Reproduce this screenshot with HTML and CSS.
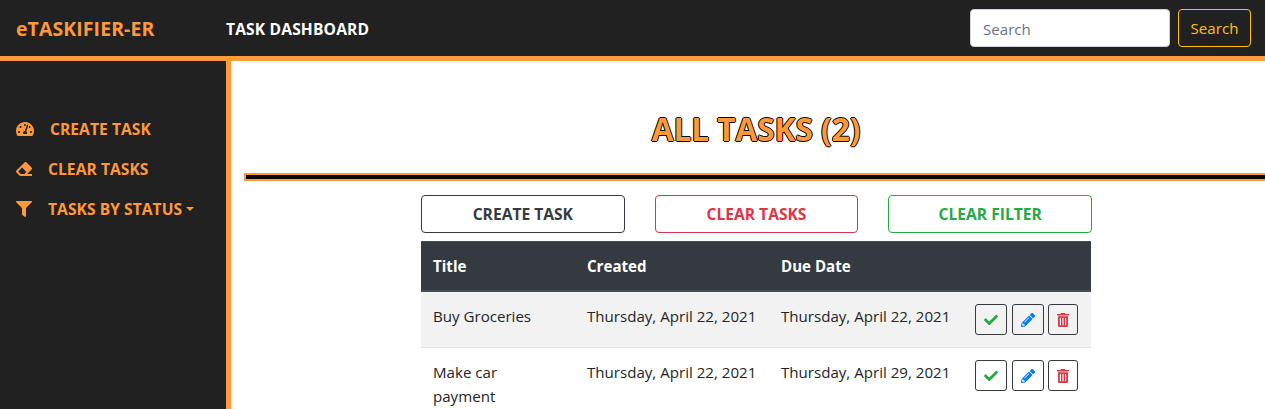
FILE: index.html
```html
<!DOCTYPE html>
<html lang="en">
<head>
<meta charset="utf-8">
<title>eTaskifier-er</title>
<link rel="stylesheet" href="styles.css">
</head>
<body>
<svg class="sprite" aria-hidden="true">
  <symbol id="gauge" viewBox="0 0 576 512"><path d="M288 32C128.940 32 0 160.940 0 320c0 52.800 14.250 102.260 39.060 144.800 5.610 9.620 16.300 15.200 27.440 15.200h443c11.140 0 21.830-5.580 27.440-15.200C561.750 422.260 576 372.800 576 320c0-159.060-128.940-288-288-288zm0 64c14.710 0 26.580 10.130 30.320 23.650-1.110 2.260-2.640 4.230-3.450 6.670l-9.220 27.670c-5.130 3.490-10.970 6.010-17.640 6.010-17.670 0-32-14.330-32-32S270.330 96 288 96zM96 384c-17.670 0-32-14.330-32-32s14.330-32 32-32 32 14.330 32 32-14.330 32-32 32zm48-160c-17.670 0-32-14.330-32-32s14.330-32 32-32 32 14.330 32 32-14.330 32-32 32zm246.770-72.410l-61.330 184C343.130 347.330 352 364.540 352 384c0 11.720-3.380 22.550-8.880 32H232.880c-5.500-9.450-8.880-20.280-8.880-32 0-33.940 26.500-61.430 59.900-63.590l61.340-184.010c4.170-12.560 17.730-19.450 30.360-15.170 12.570 4.190 19.350 17.790 15.170 30.360zm14.660 57.200l15.520-46.550c3.470-1.290 7.130-2.230 11.050-2.230 17.670 0 32 14.330 32 32s-14.330 32-32 32c-11.380-.010-20.890-6.280-26.570-15.220zM480 384c-17.670 0-32-14.330-32-32s14.330-32 32-32 32 14.330 32 32-14.330 32-32 32z"/></symbol>
  <symbol id="eraser" viewBox="0 0 512 512"><path d="M497.941 273.941c18.745-18.745 18.745-49.137 0-67.882l-160-160c-18.745-18.745-49.136-18.746-67.883 0l-256 256c-18.745 18.745-18.745 49.137 0 67.882l96 96A48.004 48.004 0 0 0 144 480h356c6.627 0 12-5.373 12-12v-40c0-6.627-5.373-12-12-12H355.883l142.058-142.059zm-302.627-62.627l137.373 137.373L265.373 416H150.628l-80-80 124.686-124.686z"/></symbol>
  <symbol id="filter" viewBox="0 0 512 512"><path d="M487.976 0H24.028C2.710 0-8.047 25.866 7.058 40.971L192 225.941V432c0 7.831 3.821 15.170 10.237 19.662l80 55.980C298.020 518.690 320 507.493 320 487.980V225.941l184.947-184.970C520.021 25.896 509.338 0 487.976 0z"/></symbol>
  <symbol id="check" viewBox="0 0 512 512"><path d="M173.898 439.404l-166.400-166.400c-9.997-9.997-9.997-26.206 0-36.204l36.203-36.204c9.997-9.998 26.207-9.998 36.204 0L192 312.690 432.095 72.596c9.997-9.997 26.207-9.997 36.204 0l36.203 36.204c9.997 9.997 9.997 26.206 0 36.204l-294.400 294.401c-9.998 9.997-26.207 9.997-36.204-.001z"/></symbol>
  <symbol id="pencil" viewBox="0 0 512 512"><path d="M497.900 142.100l-46.100 46.100c-4.700 4.700-12.300 4.700-17 0l-111-111c-4.700-4.700-4.700-12.300 0-17l46.100-46.100c18.700-18.700 49.100-18.700 67.900 0l60.100 60.100c18.800 18.700 18.800 49.100 0 67.900zM284.200 99.800L21.600 362.400.400 483.900c-2.900 16.400 11.400 30.600 27.800 27.800l121.500-21.300 262.600-262.600c4.700-4.700 4.700-12.300 0-17l-111-111c-4.800-4.700-12.400-4.700-17.100 0zM124.100 339.900c-5.500-5.500-5.500-14.300 0-19.800l154-154c5.500-5.500 14.300-5.500 19.800 0s5.500 14.300 0 19.800l-154 154c-5.500 5.500-14.300 5.500-19.800 0zM88 424h48v36.300l-64.500 11.300-31.100-31.100L51.700 376H88v48z"/></symbol>
  <symbol id="trash" viewBox="0 0 12 14"><path fill-rule="evenodd" d="M0 1h3.500l.6-1h3.800l.6 1H12v1.500H0zM1 3.200h10v9.500q0 1.300-1.300 1.300H2.300Q1 14 1 12.700zM2.800 5v7.200h1.200V5zM5.400 5v7.200h1.200V5zM8 5v7.200h1.200V5z"/></symbol>
</svg>
<header class="topbar">
  <a class="brand"><span>eTASKIFIER-ER</span></a>
  <span class="page-name">TASK DASHBOARD</span>
  <form class="search">
    <input class="search-input" type="text" placeholder="Search" aria-label="Search">
    <button class="search-button" type="button">Search</button>
  </form>
</header>
<div class="layout">
  <nav class="sidebar">
    <a class="nav-link nav-create"><svg class="icon-gauge"><use href="#gauge"/></svg><span>CREATE TASK</span></a>
    <a class="nav-link nav-clear"><svg class="icon-nav"><use href="#eraser"/></svg><span>CLEAR TASKS</span></a>
    <a class="nav-link nav-status"><svg class="icon-nav"><use href="#filter"/></svg><span>TASKS BY STATUS</span><i class="caret"></i></a>
  </nav>
  <main class="content">
    <h1 class="heading"><span>ALL TASKS (2)</span></h1>
    <div class="divider"></div>
    <div class="panel">
      <div class="actions">
        <button class="action dark">CREATE TASK</button>
        <button class="action danger">CLEAR TASKS</button>
        <button class="action success">CLEAR FILTER</button>
      </div>
      <table class="tasks">
        <colgroup><col class="col-title"><col class="col-date"><col class="col-date"><col class="col-tools"></colgroup>
        <thead><tr><th><span>Title</span></th><th><span>Created</span></th><th><span>Due Date</span></th><th></th></tr></thead>
        <tbody>
          <tr class="striped">
            <td>Buy Groceries</td><td><span class="date">Thursday, April 22, 2021</span></td><td><span class="date">Thursday, April 22, 2021</span></td>
            <td><div class="tools"><button class="tool green" aria-label="Complete"><svg><use href="#check"/></svg></button><button class="tool blue" aria-label="Edit"><svg><use href="#pencil"/></svg></button><button class="tool red" aria-label="Delete"><svg><use href="#trash"/></svg></button></div></td>
          </tr>
          <tr>
            <td>Make car<br>payment</td><td><span class="date">Thursday, April 22, 2021</span></td><td><span class="date">Thursday, April 29, 2021</span></td>
            <td><div class="tools"><button class="tool green" aria-label="Complete"><svg><use href="#check"/></svg></button><button class="tool blue" aria-label="Edit"><svg><use href="#pencil"/></svg></button><button class="tool red" aria-label="Delete"><svg><use href="#trash"/></svg></button></div></td>
          </tr>
        </tbody>
      </table>
    </div>
  </main>
</div>
</body>
</html>
```
FILE: styles.css
```css
* { box-sizing: border-box; }
html, body { height: 100%; }
body {
  margin: 0;
  display: flex;
  flex-direction: column;
  overflow: hidden;
  background: #fff;
  color: #212529;
  font: 15.1px/24px "Open Sans", "Noto Sans", sans-serif;
}
button, input { font: inherit; margin: 0; }
svg { display: block; fill: currentColor; flex: none; }
.sprite { display: none; }

.topbar {
  flex: none;
  display: flex;
  align-items: center;
  height: 61px;
  padding: 0 14px 0 16px;
  background: #212121;
  border-bottom: 5px solid #ff993c;
}
.brand { width: 210px; padding-top: 2px; color: #ff993c; font-size: 19.4px; font-weight: 700; letter-spacing: 0.13px; }
.page-name { padding-top: 1px; color: #fff; font-size: 15.6px; font-weight: 700; letter-spacing: 0.15px; white-space: nowrap; }
.search { display: flex; gap: 8px; margin-left: auto; }
.search-input {
  width: 200px;
  height: 38px;
  padding: 1px 12px 0;
  border: 1px solid #ced4da;
  border-radius: 4px;
  background: #fff;
}
.search-input::placeholder { color: #6c757d; opacity: 1; }
.search-button {
  width: 73px;
  height: 38px;
  padding: 0;
  color: #ffc107;
  background: transparent;
  border: 1px solid #ffc107;
  border-radius: 4px;
}

.layout { flex: 1; display: flex; min-height: 0; }
.sidebar {
  flex: none;
  width: 231px;
  padding: 48px 0 0 16px;
  background: #212121;
  border-right: 5px solid #ff993c;
}
.nav-link {
  display: flex;
  align-items: center;
  height: 40px;
  color: #ff993c;
  font-size: 15.6px;
  font-weight: 700;
  letter-spacing: 0.05px;
  white-space: nowrap;
}
.icon-gauge { width: 18px; height: 16px; margin-right: 16px; }
.icon-nav { width: 16px; height: 16px; margin-right: 16px; }
.caret {
  margin: -1px 0 0 4px;
  border-top: 4px solid;
  border-left: 4px solid transparent;
  border-right: 4px solid transparent;
}

.content { flex: 1; min-width: 0; padding: 48px 0 0 13px; }
.heading {
  margin: 0 0 25px;
  padding-left: 3px;
  color: #ff993c;
  font-size: 31.5px;
  line-height: 39px;
  font-weight: 700;
  text-align: center;
  text-shadow: -1px 0 #000, 0 1px #000, 1px 0 #000, 0 -1px #000;
}
.divider {
  height: 8px;
  background: #000;
  border: solid #ff993c;
  border-width: 2px 0 2px 2px;
}
.panel { width: 671px; margin: 14px 0 0 177px; }
.actions { display: grid; grid-template-columns: repeat(3, 1fr); gap: 30px; margin-bottom: 8px; }
.action {
  height: 38px;
  padding: 0;
  font-size: 15.6px;
  font-weight: 700;
  background: #fff;
  border: 1px solid;
  border-radius: 4px;
}
.dark { color: #343a40; }
.danger { color: #dc3545; }
.success { color: #28a745; }

.tasks { width: 670px; table-layout: fixed; border-spacing: 0; }
.col-title { width: 154px; }
.col-date { width: 194px; }
.col-tools { width: 128px; }
th {
  height: 51px;
  padding: 0 12px;
  color: #fff;
  background: #343a40;
  border-top: 1px solid #454d55;
  border-bottom: 2px solid #454d55;
  text-align: left;
}
td { height: 56px; padding: 12px 12px 11px; vertical-align: top; border-bottom: 1px solid #dee2e6; }
.striped td { background: #f2f2f2; }
th span, td .date { white-space: nowrap; }
.tools { display: flex; }
.tool {
  display: grid;
  place-items: center;
  width: 32px;
  height: 31px;
  padding: 0;
  background: transparent;
  border: 1px solid #343a40;
  border-radius: 3px;
}
.tool svg { width: 14px; height: 14px; }
.green { color: #28a745; margin-right: 5px; }
.blue { color: #007bff; margin-right: 4px; }
.red { color: #dc3545; width: 30px; }
.red svg { width: 12px; }
```
